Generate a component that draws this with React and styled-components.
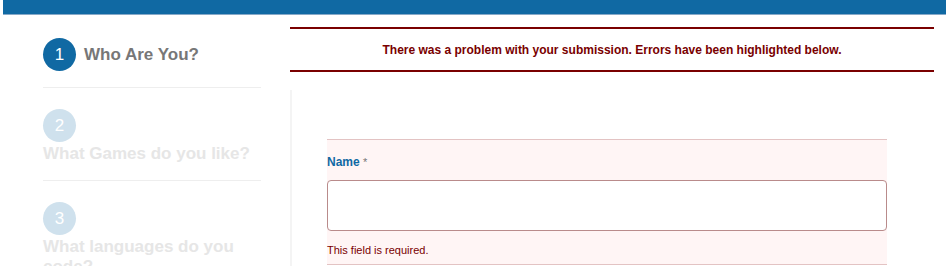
import React from 'react'
import styled, { createGlobalStyle } from 'styled-components'

const GlobalStyle = createGlobalStyle`
  html, body {
    margin: 0;
    padding: 0;
    background: #fff;
    font-family: "Liberation Sans", Arial, sans-serif;
  }
  * { box-sizing: border-box; }
`

const Page = styled.div`
  width: 951px;
  height: 266px;
  overflow: hidden;
`

const TopBar = styled.div`
  height: 15px;
  margin: 0 5px 0 3px;
  background: #1069a3;
  border-bottom: 1px solid #86a9c8;
`

const Layout = styled.div`
  display: flex;
  padding: 0 17px 0 43px;
  gap: 29px;
`

const Sidebar = styled.div`
  width: 218px;
  flex-shrink: 0;
  padding-top: 2px;
`

const Step = styled.div`
  display: flex;
  flex-wrap: wrap;
  align-items: center;
  column-gap: 8px;
  row-gap: 2px;
  padding: 21px 0 16px;
  border-bottom: 1px solid #eeeeee;
`

const Circle = styled.div`
  width: 33px;
  height: 33px;
  border-radius: 50%;
  display: flex;
  align-items: center;
  justify-content: center;
  background: ${(props) => (props.active ? '#1069a3' : '#cfe1ed')};
  color: #fff;
  font-size: 17px;
`

const StepTitle = styled.div`
  font-size: 17px;
  line-height: 20px;
  font-weight: 700;
  color: ${(props) => (props.active ? '#777777' : '#e6e6e6')};
`

const Main = styled.div`
  flex: 1;
  padding-top: 12px;
`

const ErrorBox = styled.div`
  border-top: 2px solid #7a0000;
  border-bottom: 2px solid #7a0000;
  height: 45px;
  display: flex;
  align-items: center;
  justify-content: center;
  color: #790000;
  font-size: 12px;
  font-weight: 700;
`

const Content = styled.div`
  margin-top: 18px;
  border-left: 2px solid #f4f4f4;
  padding: 49px 0 0 35px;
  min-height: 200px;
`

const FieldBlock = styled.div`
  width: 560px;
  background: #fff5f5;
  border-top: 1px solid #e3c3c3;
  border-bottom: 1px solid #e3c3c3;
  padding: 15px 0 8px;
`

const Label = styled.div`
  font-size: 12px;
  font-weight: 700;
  color: #1069a3;
  margin-bottom: 11px;

  span {
    color: #777;
    font-weight: 400;
    font-size: 11px;
  }
`

const Input = styled.input`
  display: block;
  width: 100%;
  height: 51px;
  border: 1px solid #b98b8b;
  border-radius: 4px;
  background: #fff;
  outline: none;
`

const FieldError = styled.div`
  margin-top: 13px;
  font-size: 11px;
  color: #790000;
`

const steps = [
  { n: 1, title: 'Who Are You?', active: true },
  { n: 2, title: 'What Games do you like?' },
  { n: 3, title: 'What languages do you code?' },
]

export default function App() {
  return (
    <Page>
      <GlobalStyle />
      <TopBar />
      <Layout>
        <Sidebar>
          {steps.map((s) => (
            <Step key={s.n}>
              <Circle active={s.active}>{s.n}</Circle>
              <StepTitle active={s.active}>{s.title}</StepTitle>
            </Step>
          ))}
        </Sidebar>
        <Main>
          <ErrorBox>There was a problem with your submission. Errors have been highlighted below.</ErrorBox>
          <Content>
            <FieldBlock>
              <Label>
                Name <span>*</span>
              </Label>
              <Input type="text" />
              <FieldError>This field is required.</FieldError>
            </FieldBlock>
          </Content>
        </Main>
      </Layout>
    </Page>
  )
}
